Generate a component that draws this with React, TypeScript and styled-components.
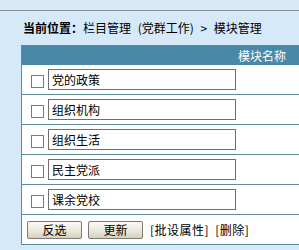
import React from 'react'
import styled, { createGlobalStyle } from 'styled-components'

const GlobalStyle = createGlobalStyle`
  html, body {
    margin: 0;
    padding: 0;
    background: #d6e9f8;
    overflow: hidden;
  }
  body {
    font-family: "Noto Sans CJK SC", "Liberation Sans", sans-serif;
    font-size: 12px;
    color: #000;
  }
`

const modules = ['党的政策', '组织机构', '组织生活', '民主党派', '课余党校']

const Page = styled.div`
  margin-top: 10px;
  border-top: 1px solid #8a8f94;
  width: 299px;
  height: 239px;
`

const Location = styled.div`
  height: 34px;
  padding-left: 23px;
  display: flex;
  align-items: center;
  line-height: 12px;
  white-space: pre;
  word-spacing: 4px;
  b {
    font-weight: bold;
    word-spacing: 0;
  }
`

const Table = styled.div`
  margin-left: 21px;
  width: 277px;
  background: #fff;
  border-left: 1px solid #5b8c9c;
  border-bottom: 1px solid #5b8c9c;
`

const Header = styled.div`
  height: 20px;
  background: #4a88a7;
  color: #fff;
  display: flex;
  align-items: center;
  justify-content: flex-end;
  padding-right: 13px;
`

const Row = styled.div<{ $last?: boolean }>`
  height: 29px;
  display: flex;
  align-items: center;
  padding-left: 9px;
  border-bottom: ${p => (p.$last ? 'none' : '1px solid #5f8d97')};
`

const Check = styled.span`
  width: 11px;
  height: 11px;
  border: 1px solid #7a7a7a;
  background: #fff;
  margin-top: 3px;
  margin-right: 4px;
`

const NameInput = styled.div`
  width: 183px;
  height: 19px;
  border: 1px solid #707070;
  padding-left: 3px;
  box-sizing: content-box;
  display: flex;
  align-items: center;
  line-height: 12px;
`

const Footer = styled(Row)`
  padding-left: 5px;
  gap: 6px;
`

const Btn = styled.div`
  width: 53px;
  height: 16px;
  border: 1px solid #7b7b73;
  border-radius: 2px;
  background: linear-gradient(#fbfaf6, #e9e5d8 60%, #d6d0bf);
  display: flex;
  align-items: center;
  justify-content: center;
  line-height: 12px;
  margin-top: 1px;
`

const Links = styled.span`
  margin-left: 1px;
  line-height: 12px;
  white-space: pre;
  letter-spacing: 0.5px;
  word-spacing: 3px;
`

export default function App() {
  return (
    <>
      <GlobalStyle />
      <Page>
        <Location>
          <b>当前位置：</b>栏目管理 (党群工作) &gt; 模块管理
        </Location>
        <Table>
          <Header>模块名称</Header>
          {modules.map(m => (
            <Row key={m}>
              <Check />
              <NameInput>{m}</NameInput>
            </Row>
          ))}
          <Footer $last>
            <Btn>反选</Btn>
            <Btn>更新</Btn>
            <Links>[批设属性] [删除]</Links>
          </Footer>
        </Table>
      </Page>
    </>
  )
}
